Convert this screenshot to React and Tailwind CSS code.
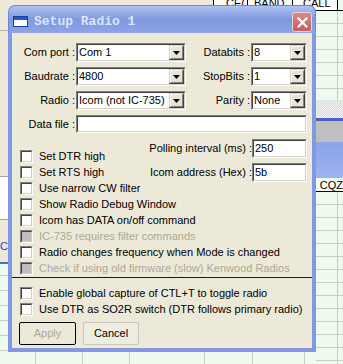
const sunkenOuter = 'border border-t-[#808080] border-l-[#808080] border-r-white border-b-white';
const sunkenInner = 'border border-t-[#404040] border-l-[#404040] border-r-[#d4d0c8] border-b-[#d4d0c8]';

function DropButton() {
  return (
    <div className="h-full w-[15px] border border-t-[#d4d0c8] border-l-[#d4d0c8] border-b-[#404040] border-r-[#404040]">
      <div className="flex h-full w-full items-center justify-center border border-t-white border-l-white border-b-[#808080] border-r-[#808080] bg-[#e6e3d7]">
        <svg width="7" height="4" viewBox="0 0 7 4">
          <path d="M0 0h7L3.5 4z" fill="#000" />
        </svg>
      </div>
    </div>
  );
}

function Field({ className, value, drop }) {
  return (
    <div className={`flex ${sunkenOuter} ${className}`}>
      <div className={`flex min-w-0 flex-1 items-center bg-white ${sunkenInner}`}>
        <span className="flex-1 truncate pl-px leading-none">{value}</span>
        {drop && <DropButton />}
      </div>
    </div>
  );
}

function Check({ label, disabled }) {
  return (
    <div className="flex h-[16px] items-center gap-[6px]">
      <span className={`block h-[13px] w-[13px] shrink-0 ${sunkenOuter}`}>
        <span className={`block h-full w-full ${sunkenInner} ${disabled ? 'bg-[#bdbdbd]' : 'bg-white'}`} />
      </span>
      <span className={`whitespace-nowrap leading-none ${disabled ? 'text-[#aca899]' : ''}`}>{label}</span>
    </div>
  );
}

function Row({ label, value, rightLabel, rightValue }) {
  return (
    <div className="flex h-[19px] items-center">
      <span className="w-[64px] whitespace-nowrap pr-px text-right">{label}</span>
      <Field className="h-[19px] w-[110px]" value={value} drop />
      <span className="w-[65px] whitespace-nowrap pr-px text-right">{rightLabel}</span>
      <Field className="h-[19px] w-[56px]" value={rightValue} drop />
    </div>
  );
}

function Dialog() {
  return (
    <div className="absolute left-[8px] top-[5px] flex h-[347px] w-[308px] flex-col">
      {/* title bar */}
      <div className="relative flex h-[28px] items-center rounded-t-[7px] border border-b-0 border-[#6f86d6] bg-gradient-to-b from-[#b0c2f0] via-[#7f99e1] to-[#8da4e7] pl-[4px]">
        <div className="mt-[3px] flex h-[11px] w-[15px] flex-col border border-[#1f3c9e] bg-white">
          <div className="h-[3px] bg-[#2b55d0]" />
        </div>
        <span className="ml-[6px] mt-[4px] font-['Liberation_Mono',monospace] text-[13px] font-bold text-[#dde6f8]">
          Setup Radio 1
        </span>
        <div className="absolute right-[3px] top-[6px] flex h-[20px] w-[20px] items-center justify-center rounded-[3px] border border-[#eed2d2] bg-gradient-to-b from-[#d88a8a] to-[#c05f5f]">
          <svg width="11" height="11" viewBox="0 0 11 11">
            <path d="M1.5 1.5l8 8M9.5 1.5l-8 8" stroke="#fff" strokeWidth="2.2" strokeLinecap="square" />
          </svg>
        </div>
      </div>
      {/* body */}
      <div className="flex flex-1 flex-col border-x-4 border-b-4 border-[#8298e2] bg-[#ece9d8]">
        <div className="mt-[10px] flex flex-col gap-[5px]">
          <Row label="Com port :" value="Com 1" rightLabel="Databits :" rightValue="8" />
          <Row label="Baudrate :" value="4800" rightLabel="StopBits :" rightValue="1" />
          <Row label="Radio :" value="Icom (not IC-735)" rightLabel="Parity :" rightValue="None" />
          <div className="flex h-[18px] items-center">
            <span className="w-[64px] whitespace-nowrap pr-px text-right">Data file :</span>
            <Field className="h-[18px] w-[231px]" value="" />
          </div>
        </div>

        <div className="mt-[6px] flex h-[41px] items-start pl-[8px] pr-[5px]">
          <div className="flex flex-col pt-[9px]">
            <Check label="Set DTR high" />
            <Check label="Set RTS high" />
          </div>
          <div className="ml-auto flex flex-col gap-[5px]">
            <div className="flex items-center justify-end">
              <span className="whitespace-nowrap">Polling interval (ms) :</span>
              <Field className="h-[19px] w-[55px]" value="250" />
            </div>
            <div className="flex items-center justify-end">
              <span className="whitespace-nowrap">Icom address (Hex) :</span>
              <Field className="h-[19px] w-[55px]" value="5b" />
            </div>
          </div>
        </div>

        <div className="flex flex-col pl-[8px]">
          <Check label="Use narrow CW filter" />
          <Check label="Show Radio Debug Window" />
          <Check label="Icom has DATA on/off command" />
          <Check label="IC-735 requires filter commands" disabled />
          <Check label="Radio changes frequency when Mode is changed" />
          <Check label="Check if using old firmware (slow) Kenwood Radios" disabled />
        </div>

        <div className="mt-px h-px bg-[#1a1a1a]" />

        <div className="mt-[7px] flex flex-col pl-[8px]">
          <Check label="Enable global capture of CTL+T to toggle radio" />
          <Check label="Use DTR as SO2R switch (DTR follows primary radio)" />
        </div>

        <div className="mt-[5px] flex gap-[7px] pl-[7px]">
          <div className="flex h-[23px] w-[57px] items-center justify-center rounded-[2px] border border-black bg-[#ece9d8] text-[#aca899]">
            Apply
          </div>
          <div className="flex h-[23px] w-[56px] items-center justify-center rounded-[2px] border border-[#c9c7ba] bg-[#efede2]">
            Cancel
          </div>
        </div>
      </div>
    </div>
  );
}

function Background() {
  return (
    <div className="flex h-full flex-col">
      <div className="flex h-[11px]">
        <div className="w-[213px] bg-[#ece9d8]" />
        <div className="flex flex-1 border-b border-black bg-[#fbfbf8]">
          <div className="flex w-[34px] items-end overflow-hidden border-l border-black pl-[12px] leading-[14px]">CE(</div>
          <div className="flex w-[45px] items-end overflow-hidden border-l border-black pl-[6px] leading-[14px]">BAND</div>
          <div className="flex w-[46px] items-end overflow-hidden border-l border-black border-r pl-[10px] leading-[14px]">CALL</div>
          <div className="flex-1 bg-[#eefaee]" />
        </div>
      </div>
      <div className="flex flex-1">
        <div className="flex w-[316px] flex-col">
          <div className="h-[19px] bg-[#ece9d8]" />
          <div className="h-px bg-[#b8b6a8]" />
          <div className="h-[145px] bg-[#ece9d8]" />
          <div className="h-[44px] border-y border-[#a8a699] bg-white" />
          <div className="flex h-[42px] items-center bg-[#ece9d8] pt-[10px] text-[#2a46c8]">CE(</div>
          <div className="h-[2px] bg-[#5068c8]" />
          <div className="flex flex-1 bg-[image:repeating-linear-gradient(to_bottom,#eefaee_0px,#eefaee_11px,#c3d1c3_11px,#c3d1c3_12px,#eefaee_12px,#eefaee_15px)]">
            <div className="w-[36px] border-r border-[#c3d1c3]" />
            <div className="w-[47px] border-r border-[#c3d1c3]" />
            <div className="w-[47px] border-r border-[#c3d1c3]" />
            <div className="w-[75px] border-r border-[#c3d1c3]" />
            <div className="w-[48px] border-r border-[#c3d1c3]" />
            <div className="w-[52px] border-r border-[#c3d1c3]" />
          </div>
        </div>
        <div className="flex flex-1 flex-col">
          <div className="flex h-[89px] bg-[image:repeating-linear-gradient(to_bottom,#eefaee_0px,#eefaee_12px,#c3d1c3_12px,#c3d1c3_13px)]">
            <div className="w-[22px] border-r border-[#c3d1c3]" />
          </div>
          <div className="h-[18px] bg-[image:repeating-conic-gradient(#d8d8d8_0_25%,#f4f4f4_0_50%)] bg-[length:2px_2px]" />
          <div className="h-[3px] bg-[#4c62c4]" />
          <div className="h-[21px] bg-[#bfbfbf]" />
          <div className="h-[36px] bg-gradient-to-b from-[#8aa3ea] to-[#9db3ef]" />
          <div className="flex h-[14px] items-end border-b border-black bg-[#f4fbf4] pl-[4px] leading-[12px]">CQZ</div>
          <div className="flex flex-1 bg-[image:repeating-linear-gradient(to_bottom,#eefaee_0px,#eefaee_12px,#c3d1c3_12px,#c3d1c3_13px)]">
            <div className="w-[22px] border-r border-[#c3d1c3]" />
          </div>
        </div>
      </div>
    </div>
  );
}

export default function App() {
  return (
    <div className="relative h-[364px] w-[343px] overflow-hidden bg-[#ece9d8] font-['Liberation_Sans',Arial,sans-serif] text-[11px] text-black">
      <Background />
      <Dialog />
    </div>
  );
}
